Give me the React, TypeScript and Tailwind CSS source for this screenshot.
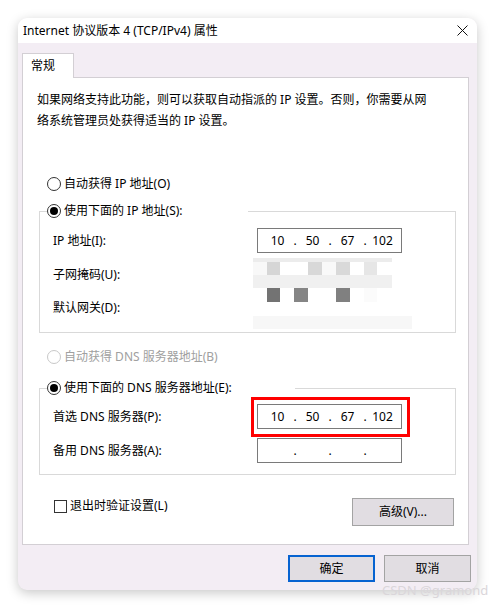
import { Fragment } from "react";

function Radio({ label, checked = false, disabled = false }: { label: string; checked?: boolean; disabled?: boolean }) {
  return (
    <div className="flex h-[16px] items-center gap-[3px]">
      <span
        className={
          disabled
            ? "flex h-[14px] w-[14px] items-center justify-center rounded-full border border-[#c8c8c8] bg-white"
            : "flex h-[14px] w-[14px] items-center justify-center rounded-full border border-[#333333] bg-white"
        }
      >
        {checked && <span className="h-[8px] w-[8px] rounded-full bg-black" />}
      </span>
      <span className={disabled ? "text-[#a0a0a0]" : "text-black"}>{label}</span>
    </div>
  );
}

function IpBox({ parts, highlight = false }: { parts: string[]; highlight?: boolean }) {
  return (
    <div className="relative flex h-[25px] w-[145px] items-center border border-[#7a7a7a] bg-white pl-[3px]">
      {parts.map((p, i) => (
        <Fragment key={i}>
          {i > 0 && <span className="flex w-[2px] justify-center">.</span>}
          <span className="w-[33px] text-center">{p}</span>
        </Fragment>
      ))}
      {/* red annotation frame */}
      {highlight && (
        <div className="pointer-events-none absolute -bottom-[9px] -left-[7px] -right-[9px] -top-[8px] border-[3px] border-[#ff0000]" />
      )}
    </div>
  );
}

// pixelated / blurred area over the subnet mask and gateway fields
function Mosaic() {
  return (
    <svg width="160" height="72" viewBox="0 0 160 72" className="-mb-[10px] -ml-[4px] mt-[5px] block">
      <rect x="0" y="0" width="139" height="4" fill="#ececec" />
      <rect x="0" y="4" width="14" height="13" fill="#f8f8f8" />
      <rect x="14" y="4" width="13" height="13" fill="#d6d6d6" />
      <rect x="55" y="4" width="14" height="13" fill="#d8d8d8" />
      <rect x="69" y="4" width="14" height="13" fill="#f9f9f9" />
      <rect x="83" y="4" width="14" height="13" fill="#d9d9d9" />
      <rect x="111" y="4" width="13" height="13" fill="#e6e6e6" />
      <rect x="0" y="17" width="139" height="13" fill="#f0f0f0" />
      <rect x="14" y="30" width="13" height="14" fill="#737373" />
      <rect x="41" y="30" width="14" height="14" fill="#858585" />
      <rect x="83" y="30" width="14" height="14" fill="#808080" />
      <rect x="111" y="30" width="13" height="14" fill="#fbfbfb" />
      <rect x="0" y="58" width="159" height="13" fill="#f7f7f7" />
    </svg>
  );
}

export default function App() {
  return (
    <div className="relative h-[608px] w-[495px] overflow-hidden bg-white pl-[18px] pt-[18px] font-['Noto_Sans','Noto_Sans_CJK_SC',sans-serif] text-[12px] text-black">
      <div className="flex h-[572px] w-[459px] flex-col overflow-hidden rounded-[9px] bg-[#f3edf4] shadow-[0_3px_12px_rgba(0,0,0,0.22)]">
        {/* Title bar */}
        <div className="flex h-[25px] items-center justify-between bg-white pl-[5px] pr-[9px]">
          <span className="leading-none">Internet 协议版本 4 (TCP/IPv4) 属性</span>
          <svg width="11" height="11" viewBox="0 0 11 11">
            <path d="M0.5 0.5 L10.5 10.5 M10.5 0.5 L0.5 10.5" stroke="#111" strokeWidth="1" />
          </svg>
        </div>

        {/* Body */}
        <div className="flex flex-1 flex-col pl-[4px] pt-[10px]">
          <div className="relative z-10 -mb-px flex h-[25px] w-[52px] items-center border border-b-0 border-[#d3cfd4] bg-white pl-[8px]">
            常规
          </div>

          <div className="flex h-[468px] w-[447px] flex-col border border-[#d3cfd4] bg-white">
            <p className="pl-[14px] pt-[11px] leading-[21px]">
              如果网络支持此功能，则可以获取自动指派的 IP 设置。否则，你需要从网
              <br />
              络系统管理员处获得适当的 IP 设置。
            </p>

            <div className="ml-[24px] mt-[45px]">
              <Radio label="自动获得 IP 地址(O)" />
            </div>

            <fieldset className="ml-[16px] mt-[11px] w-[417px] border border-[#d9d9d9] pb-[12px]">
              <legend className="ml-[7px] w-[201px]">
                <Radio label="使用下面的 IP 地址(S):" checked />
              </legend>
              <div className="flex pl-[13px] pt-[9px]">
                <div className="flex w-[204px] flex-col">
                  <div className="flex h-[25px] items-center">IP 地址(I):</div>
                  <div className="mt-[9px] flex h-[25px] items-center">子网掩码(U):</div>
                  <div className="mt-[8px] flex h-[25px] items-center">默认网关(D):</div>
                </div>
                <div className="flex flex-col">
                  <IpBox parts={["10", "50", "67", "102"]} />
                  <Mosaic />
                </div>
              </div>
            </fieldset>

            <div className="ml-[24px] mt-[16px]">
              <Radio label="自动获得 DNS 服务器地址(B)" disabled />
            </div>

            <fieldset className="ml-[16px] mt-[15px] w-[417px] border border-[#d9d9d9] pb-[11px]">
              <legend className="ml-[7px] w-[248px]">
                <Radio label="使用下面的 DNS 服务器地址(E):" checked />
              </legend>
              <div className="flex flex-col gap-[9px] pl-[13px] pt-[8px]">
                <div className="flex items-center">
                  <span className="w-[204px]">首选 DNS 服务器(P):</span>
                  <IpBox parts={["10", "50", "67", "102"]} highlight />
                </div>
                <div className="flex items-center">
                  <span className="w-[204px]">备用 DNS 服务器(A):</span>
                  <IpBox parts={["", "", "", ""]} />
                </div>
              </div>
            </fieldset>

            <div className="mt-[23px] flex items-start justify-between pl-[31px] pr-[14px]">
              <label className="flex h-[16px] items-center gap-[3px]">
                <span className="h-[13px] w-[13px] border border-[#333333] bg-white" />
                <span>退出时验证设置(L)</span>
              </label>
              <button className="flex h-[28px] w-[102px] items-center justify-center border border-[#a3a3a3] bg-[#e1dde2]">
                高级(V)...
              </button>
            </div>
          </div>

          <div className="mt-[10px] flex justify-end gap-[9px] pr-[6px]">
            <button className="flex h-[27px] w-[87px] items-center justify-center border-2 border-[#0763d1] bg-[#e1dde2]">
              确定
            </button>
            <button className="flex h-[27px] w-[87px] items-center justify-center border border-[#a3a3a3] bg-[#e1dde2]">
              取消
            </button>
          </div>
        </div>
      </div>

      {/* watermark */}
      <span className="absolute left-[382px] top-[584px] whitespace-nowrap text-[13px] leading-none text-[#dad6da]">CSDN @gramond</span>
    </div>
  );
}
